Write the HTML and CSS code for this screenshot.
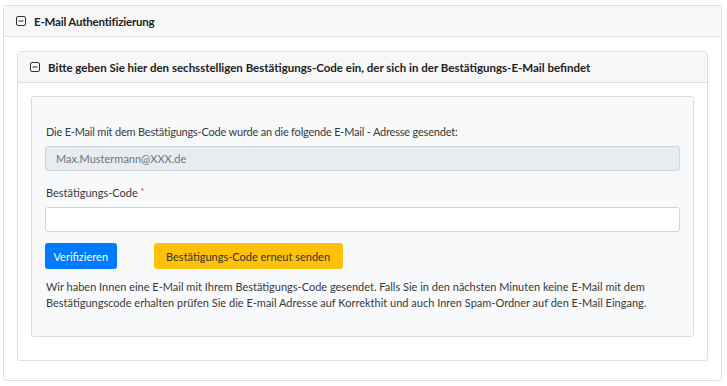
FILE: index.html
```html
<!DOCTYPE html>
<html lang="de">
<head>
<meta charset="utf-8">
<link rel="stylesheet" href="styles.css">
</head>
<body>
<div class="card outer">
  <div class="card-header">
    <svg class="toggle" width="10" height="10" viewBox="0 0 10 10"><rect x="0.5" y="0.5" width="9" height="9" rx="1.5" fill="none" stroke="#333" stroke-width="1"/><line x1="2.5" y1="5" x2="7.5" y2="5" stroke="#333" stroke-width="1"/></svg>
    <span class="title-outer">E-Mail Authentifizierung</span>
  </div>
  <div class="card-body">
    <div class="card inner">
      <div class="card-header">
        <svg class="toggle" width="10" height="10" viewBox="0 0 10 10"><rect x="0.5" y="0.5" width="9" height="9" rx="1.5" fill="none" stroke="#333" stroke-width="1"/><line x1="2.5" y1="5" x2="7.5" y2="5" stroke="#333" stroke-width="1"/></svg>
        <span>Bitte geben Sie hier den sechsstelligen Bestätigungs-Code ein, der sich in der Bestätigungs-E-Mail befindet</span>
      </div>
      <div class="card-body">
        <div class="panel">
          <p class="info">Die E-Mail mit dem Bestätigungs-Code wurde an die folgende E-Mail - Adresse gesendet:</p>
          <div class="input readonly">Max.Mustermann@XXX.de</div>
          <label class="label">Bestätigungs-Code <span class="req">*</span></label>
          <div class="input"></div>
          <div class="actions">
            <button class="btn btn-primary">Verifizieren</button>
            <button class="btn btn-warning">Bestätigungs-Code erneut senden</button>
          </div>
          <p class="note">Wir haben Innen eine E-Mail mit Ihrem Bestätigungs-Code gesendet. Falls Sie in den nächsten Minuten keine E-Mail mit dem Bestätigungscode erhalten prüfen Sie die E-mail Adresse auf Korrekthit und auch Inren Spam-Ordner auf den E-Mail Eingang.</p>
        </div>
      </div>
    </div>
  </div>
</div>
</body>
</html>
```
FILE: styles.css
```css
* { box-sizing: border-box; }
html, body { margin: 0; padding: 0; background: #fff; }
body {
  font-family: "Lato", "Noto Sans", sans-serif;
  font-size: 11px;
  color: #3a3a3a;
  padding: 5px 5px 0 3px;
}
.card {
  border: 1px solid #dfdfdf;
  border-radius: 3px;
  background: #fff;
}
.outer { width: 719px; height: 376px; }
.card-header {
  display: flex;
  align-items: center;
  gap: 8px;
  background: #f7f7f7;
  border-bottom: 1px solid #dfdfdf;
  font-weight: 700;
  font-size: 11.5px;
  color: #222;
}
.title-outer { letter-spacing: -0.2px; }
.outer > .card-header { height: 31px; padding-left: 12px; }
.outer > .card-body { padding: 14px 13px 19px 13px; }
.inner { height: 310px; }
.inner > .card-header { height: 31px; padding-left: 12px; }
.inner > .card-body { padding: 13px 13px 24px 13px; }
.toggle { flex: none; }
.panel {
  background: #f8f9fa;
  border: 1px solid #dadce0;
  border-radius: 3px;
  padding: 28px 13px 22px 13px;
  height: 241px;
}
.info { margin: 0 0 8px 1px; letter-spacing: -0.2px; }
.input {
  height: 25px;
  border: 1px solid #ced4da;
  border-radius: 3px;
  background: #fff;
  display: flex;
  align-items: center;
  padding-left: 10px;
  color: #555;
}
.readonly { background: #e9ecef; color: #6c757d; }
.label { display: block; margin: 15px 0 8px 1px; }
.req { color: #dc3545; font-size: 9px; vertical-align: top; }
.actions { display: flex; gap: 37px; margin-top: 11px; }
.btn {
  font-family: inherit;
  font-size: 11px;
  height: 26px;
  border: none;
  border-radius: 3px;
  padding: 0 12px;
}
.btn-primary { background: #007bff; color: #fff; padding: 0 8.5px; }
.btn-warning { background: #ffc107; color: #333; padding: 0 12.5px; }
.note { margin: 10px 0 0 1px; line-height: 16px; }
```
